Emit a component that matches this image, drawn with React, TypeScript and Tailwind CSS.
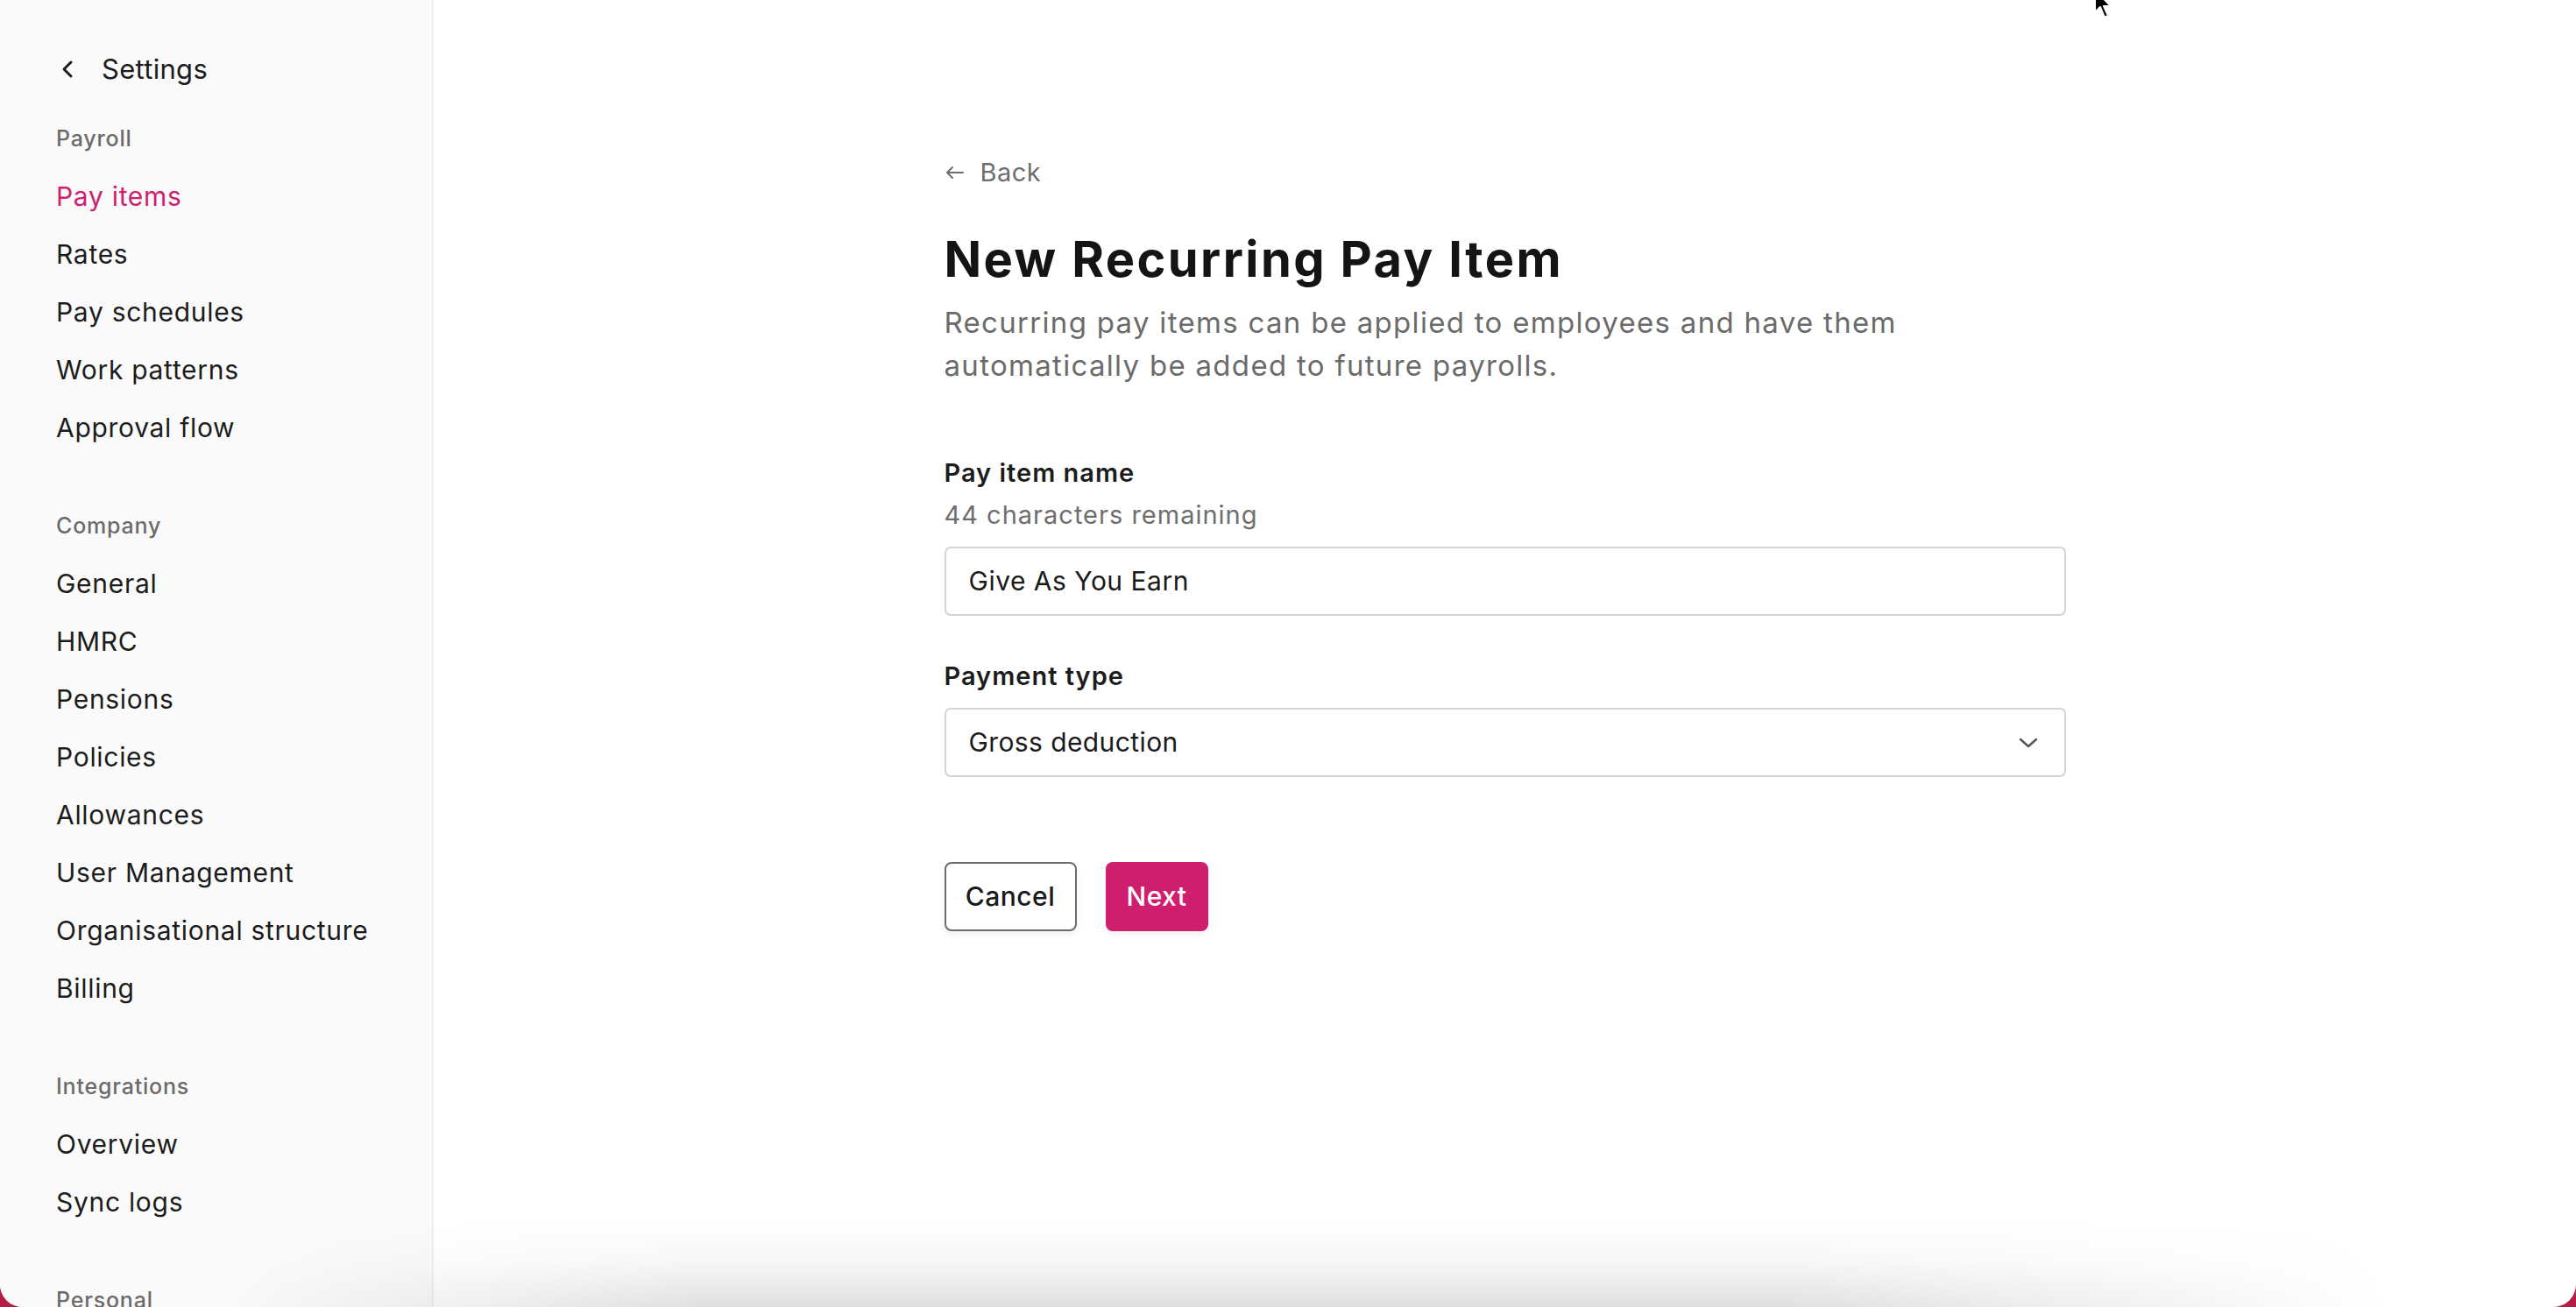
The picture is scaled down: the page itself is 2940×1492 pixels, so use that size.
import React from "react";

const font = { fontFamily: "Inter, 'Noto Sans', sans-serif" };

function NavSection({ title, items, active, first }: { title: string; items: string[]; active?: string; first?: boolean }) {
  return (
    <div className={first ? "mt-[38px]" : "mt-[60px]"}>
      <div className="h-[40px] flex items-center text-[25px] font-medium tracking-[0.8px] text-[#6b6b6b]">{title}</div>
      <div className="mt-[12px] flex flex-col">
        {items.map((it) => (
          <div
            key={it}
            className={
              "h-[66px] flex items-center text-[30px] tracking-[0.7px] " +
              (it === active ? "text-[#d01e6f]" : "text-[#1c1c1c]")
            }
          >
            {it}
          </div>
        ))}
      </div>
    </div>
  );
}

export default function App() {
  return (
    <div className="relative w-full h-[1492px] bg-[#b51d44] overflow-hidden" style={font}>
      <div className="flex h-full w-full bg-white rounded-b-[26px] overflow-hidden">
        {/* Sidebar */}
        <aside className="w-[495px] shrink-0 h-full bg-[#fafafa] border-r-2 border-[#efefef] pl-[64px] pt-[57px] overflow-hidden">
          <div className="h-[44px] flex items-center">
            <svg width="20" height="22" viewBox="0 0 20 22" className="ml-[4px]">
              <path d="M13 3 L5 11 L13 19" fill="none" stroke="#1c1c1c" strokeWidth="3" strokeLinecap="round" strokeLinejoin="round" />
            </svg>
            <span className="ml-[28px] text-[31px] tracking-[0.3px] text-[#1c1c1c]">Settings</span>
          </div>
          <NavSection
            first
            title="Payroll"
            active="Pay items"
            items={["Pay items", "Rates", "Pay schedules", "Work patterns", "Approval flow"]}
          />
          <NavSection
            title="Company"
            items={[
              "General",
              "HMRC",
              "Pensions",
              "Policies",
              "Allowances",
              "User Management",
              "Organisational structure",
              "Billing",
            ]}
          />
          <NavSection title="Integrations" items={["Overview", "Sync logs"]} />
          <NavSection title="Personal" items={["Profile"]} />
        </aside>

        {/* Main */}
        <main className="flex-1 h-full overflow-hidden">
          <div className="w-[1280px] mx-auto pt-[177px]">
            <div className="h-[40px] flex items-center text-[#6e6e6e]">
              <svg width="24" height="18" viewBox="0 0 24 18" className="mr-[17px]">
                <path d="M21 9 H3 M9 3 L3 9 L9 15" fill="none" stroke="#6e6e6e" strokeWidth="2" strokeLinecap="round" strokeLinejoin="round" />
              </svg>
              <span className="text-[29px] tracking-[0.5px]">Back</span>
            </div>
            <h1 className="mt-[47px] h-[64px] flex items-center text-[56px] font-bold text-[#141414] tracking-[2.4px]">
              New Recurring Pay Item
            </h1>
            <p className="mt-[16px] w-[1180px] text-[33px] leading-[49px] tracking-[1.3px] text-[#6b6b6b]">
              Recurring pay items can be applied to employees and have them automatically be added to future payrolls.
            </p>

            <div className="mt-[78px] h-[40px] flex items-center text-[29px] font-semibold tracking-[1px] text-[#1c1c1c]">Pay item name</div>
            <div className="mt-[8px] h-[40px] flex items-center text-[29px] tracking-[1px] text-[#6e6e6e]">44 characters remaining</div>
            <div className="mt-[16px] h-[79px] w-full border-2 border-[#d4d4d4] rounded-[7px] flex items-center px-[26px] text-[30px] tracking-[0.5px] text-[#1a1a1a]">
              Give As You Earn
            </div>

            <div className="mt-[49px] h-[40px] flex items-center text-[29px] font-semibold tracking-[1px] text-[#1c1c1c]">Payment type</div>
            <div className="mt-[16px] h-[79px] w-full border-2 border-[#d4d4d4] rounded-[7px] flex items-center justify-between pl-[26px] pr-[30px] text-[30px] tracking-[0.4px] text-[#1a1a1a]">
              <span>Gross deduction</span>
              <svg width="22" height="14" viewBox="0 0 22 14">
                <path d="M2 3 L11 11 L20 3" fill="none" stroke="#555555" strokeWidth="2.5" strokeLinecap="round" strokeLinejoin="round" />
              </svg>
            </div>

            <div className="mt-[97px] flex gap-[33px]">
              <button className="h-[79px] w-[151px] border-2 border-[#6b6b6b] rounded-[8px] bg-white text-[30px] font-medium tracking-[0.5px] text-[#1a1a1a] shadow-[0_4px_8px_rgba(0,0,0,0.06)]">
                Cancel
              </button>
              <button className="h-[79px] w-[117px] rounded-[8px] bg-[#d01e6f] text-[30px] font-medium tracking-[0.5px] text-white shadow-[0_4px_8px_rgba(0,0,0,0.06)]">
                Next
              </button>
            </div>
          </div>
        </main>
      </div>

      {/* bottom shadow overlay */}
      <div className="pointer-events-none absolute bottom-0 left-[250px] w-[2480px] h-[100px] bg-[linear-gradient(to_bottom,rgba(0,0,0,0),rgba(0,0,0,0.035)_50%,rgba(0,0,0,0.12))] [mask-image:linear-gradient(to_right,transparent,black_22%,black_72%,transparent)]" />

      {/* cursor */}
      <svg className="absolute left-[2388px] top-[-14px]" width="28" height="40" viewBox="0 0 28 40">
        <path d="M3 2 L3 28 L9 22 L14 34 L18 32 L13 21 L21 21 Z" fill="#000" stroke="#fff" strokeWidth="2" strokeLinejoin="round" />
      </svg>
    </div>
  );
}
